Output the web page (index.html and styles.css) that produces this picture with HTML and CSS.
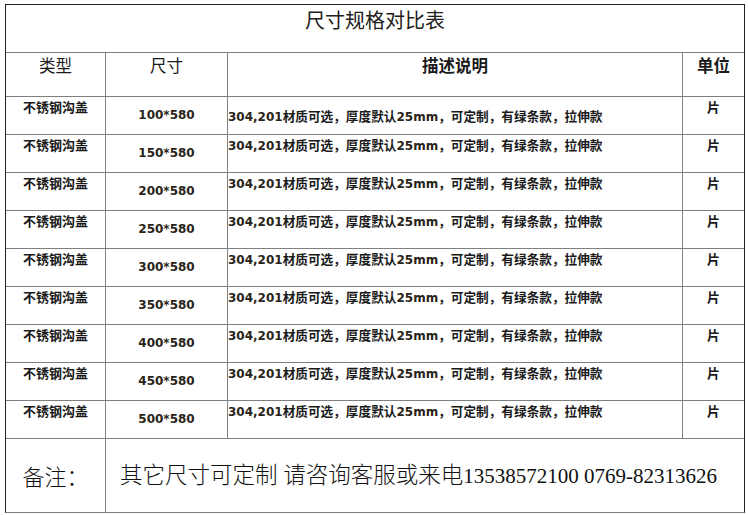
FILE: index.html
```html
<!DOCTYPE html>
<html lang="zh-CN">
<head>
<meta charset="utf-8">
<title>尺寸规格对比表</title>
<link rel="stylesheet" href="styles.css">
</head>
<body>
<div class="sheet">
  <div class="title">尺寸规格对比表</div>

  <div class="hd">类型</div>
  <div class="hd">尺寸</div>
  <div class="hd strong">描述说明</div>
  <div class="hd strong">单位</div>

  <div class="type">不锈钢沟盖</div>
  <div class="size">100*580</div>
  <div class="desc mid"><span class="n">304,201</span>材质可选，厚度默认<span class="n">25mm</span>，可定制，有绿条款，拉伸款</div>
  <div class="unit">片</div>

  <div class="type">不锈钢沟盖</div>
  <div class="size">150*580</div>
  <div class="desc"><span class="n">304,201</span>材质可选，厚度默认<span class="n">25mm</span>，可定制，有绿条款，拉伸款</div>
  <div class="unit">片</div>

  <div class="type">不锈钢沟盖</div>
  <div class="size">200*580</div>
  <div class="desc"><span class="n">304,201</span>材质可选，厚度默认<span class="n">25mm</span>，可定制，有绿条款，拉伸款</div>
  <div class="unit">片</div>

  <div class="type">不锈钢沟盖</div>
  <div class="size">250*580</div>
  <div class="desc"><span class="n">304,201</span>材质可选，厚度默认<span class="n">25mm</span>，可定制，有绿条款，拉伸款</div>
  <div class="unit">片</div>

  <div class="type">不锈钢沟盖</div>
  <div class="size">300*580</div>
  <div class="desc"><span class="n">304,201</span>材质可选，厚度默认<span class="n">25mm</span>，可定制，有绿条款，拉伸款</div>
  <div class="unit">片</div>

  <div class="type">不锈钢沟盖</div>
  <div class="size">350*580</div>
  <div class="desc"><span class="n">304,201</span>材质可选，厚度默认<span class="n">25mm</span>，可定制，有绿条款，拉伸款</div>
  <div class="unit">片</div>

  <div class="type">不锈钢沟盖</div>
  <div class="size">400*580</div>
  <div class="desc"><span class="n">304,201</span>材质可选，厚度默认<span class="n">25mm</span>，可定制，有绿条款，拉伸款</div>
  <div class="unit">片</div>

  <div class="type">不锈钢沟盖</div>
  <div class="size">450*580</div>
  <div class="desc"><span class="n">304,201</span>材质可选，厚度默认<span class="n">25mm</span>，可定制，有绿条款，拉伸款</div>
  <div class="unit">片</div>

  <div class="type">不锈钢沟盖</div>
  <div class="size">500*580</div>
  <div class="desc"><span class="n">304,201</span>材质可选，厚度默认<span class="n">25mm</span>，可定制，有绿条款，拉伸款</div>
  <div class="unit">片</div>

  <div class="note-label">备注：</div>
  <div class="note">其它尺寸可定制 请咨询客服或来电<span class="tel">13538572100 0769-82313626</span></div>
</div>
</body>
</html>
```

FILE: styles.css
```css
html, body {
  margin: 0;
  padding: 0;
  background: #ffffff;
}

.sheet {
  margin: 4px 0 0 5px;
  width: 738px;
  display: grid;
  grid-template-columns: 99px 121px 454px 61px;
  grid-template-rows: 47px 43px repeat(9, 37px) 73px;
  gap: 1px;
  background: #808080;
  border: 1px solid #222222;
  border-bottom-color: #808080;
  font-family: "Noto Sans CJK SC", sans-serif;
  color: #1a1a1a;
}

.sheet > div {
  background: #ffffff;
  white-space: nowrap;
  overflow: hidden;
}

.title {
  grid-column: 1 / -1;
  text-align: center;
  font-size: 20px;
  line-height: 24px;
  padding-top: 3px;
  color: #202020;
}

.hd {
  text-align: center;
  font-size: 16.5px;
  line-height: 20px;
  padding-top: 2px;
}

.hd.strong {
  font-weight: 700;
}

.type,
.unit {
  text-align: center;
  font-size: 13px;
  font-weight: 700;
  line-height: 18px;
  padding-top: 1px;
}

.size {
  text-align: center;
  font-family: "DejaVu Sans", sans-serif;
  font-size: 12px;
  font-weight: 700;
  line-height: 37px;
  color: #2a2418;
}

.desc {
  font-size: 12.65px;
  font-weight: 700;
  line-height: 18px;
  padding-top: 1px;
}

.desc.mid {
  padding-top: 10px;
}

.desc .n {
  font-family: "DejaVu Sans", sans-serif;
  font-size: 12px;
  color: #2a2418;
}

.note-label {
  text-align: center;
  font-size: 22px;
  font-weight: 300;
  line-height: 73px;
  color: #111111;
}

.note {
  grid-column: 2 / -1;
  font-family: "Liberation Serif", "Noto Sans CJK SC", serif;
  font-size: 22.5px;
  font-weight: 300;
  line-height: 73px;
  padding-left: 14px;
  color: #111111;
}

.note .tel {
  font-family: "Liberation Serif", serif;
  font-size: 21px;
  font-weight: 400;
}
```
